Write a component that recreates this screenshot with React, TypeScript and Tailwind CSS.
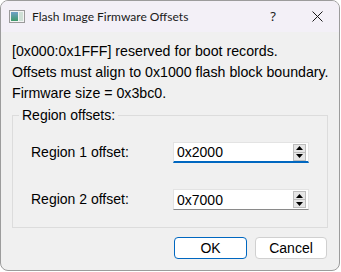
import * as React from "react";

function SpinBox({ value, focused }: { value: string; focused?: boolean }) {
  return (
    <div
      className={`flex h-[21px] w-[136px] items-center bg-white border border-[#e3e3e3] ${
        focused ? "border-b-[#0067c0] border-b-2" : "border-b-[#8a8a8a]"
      }`}
    >
      <span className="flex-1 pl-[3px] text-[14px] leading-none text-black">{value}</span>
      <div className="mr-[2px] flex h-[17px] w-[13px] flex-col border border-[#bcbcbc] bg-[#e6e6e6]">
        <div className="flex flex-1 items-center justify-center border-b border-[#bcbcbc]">
          <svg width="7" height="4" viewBox="0 0 7 4">
            <path d="M0 4 L3.5 0 L7 4 Z" fill="#000" />
          </svg>
        </div>
        <div className="flex flex-1 items-center justify-center">
          <svg width="7" height="4" viewBox="0 0 7 4">
            <path d="M0 0 L3.5 4 L7 0 Z" fill="#000" />
          </svg>
        </div>
      </div>
    </div>
  );
}

export default function App(): React.JSX.Element {
  return (
    <div
      className="h-[272px] w-[341px] bg-white"
      style={{ fontFamily: '"Liberation Sans", Arial, sans-serif' }}
    >
      <div className="flex h-[271px] w-[340px] flex-col overflow-hidden rounded-lg border border-[#9c9c9c] bg-[#f0f0f0]">
        {/* Title bar */}
        <div className="flex h-[31px] items-center bg-[#f3f0f7] pl-[8px]">
          <svg width="16" height="13" viewBox="0 0 16 13">
            <rect x="0.5" y="0.5" width="15" height="12" fill="#f4f4f4" stroke="#9a9a9a" />
            <defs>
              <linearGradient id="g" x1="0" y1="0" x2="0" y2="1">
                <stop offset="0" stopColor="#6fa0c8" />
                <stop offset="1" stopColor="#3f9a6a" />
              </linearGradient>
            </defs>
            <rect x="2" y="2" width="7" height="9" fill="url(#g)" />
            <rect x="10" y="2" width="4" height="9" fill="#cfe0d6" />
          </svg>
          <span
            className="ml-[7px] text-[12px] text-[#1a1a1a]"
            style={{ fontFamily: 'Lato, "Noto Sans", sans-serif' }}
          >
            Flash Image Firmware Offsets
          </span>
          <span
            className="ml-auto mr-[36px] text-[13px] text-[#1a1a1a]"
            style={{ fontFamily: '"Noto Sans", sans-serif' }}
          >
            ?
          </span>
          <svg className="mr-[16px]" width="11" height="11" viewBox="0 0 11 11">
            <path d="M0.5 0.5 L10.5 10.5 M10.5 0.5 L0.5 10.5" stroke="#1a1a1a" strokeWidth="1" />
          </svg>
        </div>

        {/* Body */}
        <div className="flex flex-1 flex-col px-[11px] pt-[9px]">
          <div className="whitespace-nowrap text-[14.2px] leading-[21px] text-black">
            <p>[0x000:0x1FFF] reserved for boot records.</p>
            <p>Offsets must align to 0x1000 flash block boundary.</p>
            <p>Firmware size = 0x3bc0.</p>
          </div>

          <fieldset className="mt-[3px] h-[121px] border border-[#dcdcdc] px-[6px]">
            <legend className="px-[3px] text-[14px] leading-[16px] text-black">
              Region offsets:
            </legend>
            <div className="mt-[19px] flex flex-col gap-[26px] px-[12px]">
              <div className="flex items-center justify-between">
                <span className="text-[14px] text-black">Region 1 offset:</span>
                <SpinBox value="0x2000" focused />
              </div>
              <div className="flex items-center justify-between">
                <span className="text-[14px] text-black">Region 2 offset:</span>
                <SpinBox value="0x7000" />
              </div>
            </div>
          </fieldset>

          <div className="mt-[9px] flex justify-end gap-[8px] pr-[1px]">
            <button className="h-[22px] w-[73px] rounded-[4px] border border-[#0067c0] bg-white text-[14px] text-black">
              OK
            </button>
            <button className="h-[22px] w-[72px] rounded-[4px] border border-[#d0d0d0] bg-white text-[14px] text-black">
              Cancel
            </button>
          </div>
        </div>
      </div>
    </div>
  );
}
